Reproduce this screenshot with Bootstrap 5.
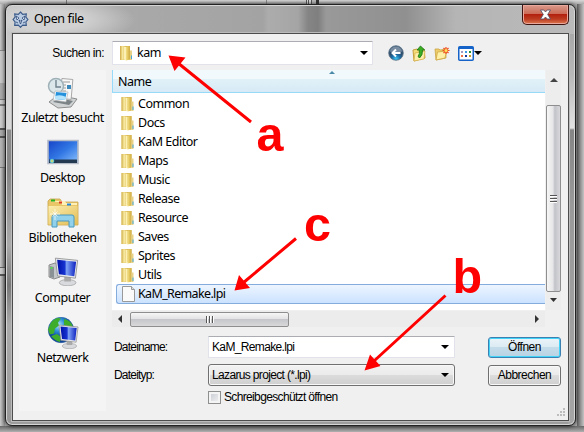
<!DOCTYPE html>
<html lang="de">
<head>
<meta charset="utf-8">
<title>Open file</title>
<link href="https://cdn.jsdelivr.net/npm/bootstrap@5.3.0/dist/css/bootstrap.min.css" rel="stylesheet">
<style>
html,body{width:584px;height:432px;overflow:hidden}
body{font:12.5px/18px "Noto Sans","Open Sans",sans-serif;color:#000;letter-spacing:-.5px;padding:4px 7px 5px 5px;
 background:
 linear-gradient(#777,#777) 66px 0/1px 4px no-repeat,
 linear-gradient(90deg,#555 1px,#ddd 1px 2px,#555 2px 3px,#ddd 3px 5px,#555 5px 6px,#bbb 6px 10px,#333 10px) 306px 0/13px 4px no-repeat,
 linear-gradient(#888,#888) 266px 0/1px 4px no-repeat,
 linear-gradient(transparent 50px,#888 50px 51px,#c8c8c8 51px 83px,#aaa 83px 99px,#777 99px 100px,#ccc 100px 104px,#777 104px 106px,#ccc 106px 128px,#555 128px 130px,#aaa 130px 136px,#555 136px 138px,#b5b5b5 138px 167px,#777 167px 168px,transparent 168px 267px,#666 267px 268px,#ccc 268px 274px,#555 274px 276px,transparent 276px) 0 0/5px 432px no-repeat,
 linear-gradient(#d8d8d8,#aaa) 0 0/584px 4px no-repeat,
 linear-gradient(90deg,#c9c9c9,#8d8d8d) 0 0/5px 426px no-repeat,
 linear-gradient(90deg,#606060,#c4c4c4) 577px 0/7px 426px no-repeat,
 linear-gradient(#686868,#b0b0b0) 0 426px/584px 6px no-repeat,#aaa}
svg{display:block;flex:none}
.dialog{width:571px;height:422px;border:1px solid #222;border-radius:7px;box-shadow:inset 0 0 0 1px #d5d5d5,0 0 4px #222;padding:0 6px 5px;
 background:
 radial-gradient(ellipse 90px 24px at 40px 15px,#d2d2d2 40%,transparent) 0 0/571px 29px no-repeat,
 linear-gradient(90deg,#bbb 0,#a9a9a9 120px,#a3a3a3 257px,#acacac 262px,#a5a5a5 292px,#858585 302px,#7f7f7f 312px,#999 320px,#909090 400px,#b5b5b5 450px,#bababa) 0 0/571px 29px no-repeat,
 linear-gradient(#c4c4c4 0,#d9d9d9 124px,#8b8b8b 125px,#858585 165px,#aaa 240px,#777 280px,#aaa 320px,#979797) 0 0/6px 100% no-repeat,
 linear-gradient(#a5a5a5 20px,#b8b8b8 70px,#e2e2e2 123px,#858585 125px,#999 200px,#a5a5a5) 100% 0/7px 100% no-repeat,
 #9c9c9c}
.caption-bar{height:28px;padding:6px 0 0 0}
.caption-bar span{margin-left:5px;line-height:16px;letter-spacing:-.4px}
.close-box{width:47px;height:20px;border:1px solid #401410;border-top:0;border-radius:0 0 5px 5px;box-shadow:inset 0 0 0 1px #eaa89c;background:linear-gradient(#d99a8c,#cc6c59 45%,#b3210e 50%,#bd3d23 75%,#dd7b51);margin:-6px 0 0 auto}
.client{height:388px;border:1px solid #4c4c4c;background:#f0f0f0;box-shadow:0 0 0 1px #bbb;padding:7px 6px 0}
.shell-font{font-family:"Liberation Sans",Arial,sans-serif;font-size:12px;letter-spacing:-.65px}
.look-label{width:93px;padding-right:8px;line-height:22px;letter-spacing:-.5px}
.drop{background:#fff;border:1px solid #e2e3ea;border-top-color:#abadb3;border-radius:1px}
.look{width:261px;height:24px;padding:0 4px 0 6px}
.look span{margin-left:4px}
.tools{padding-left:15px;gap:7.5px}
.down-arrow{width:0;height:0;border:4px solid transparent;border-top-color:#000;border-bottom:0;flex:none}
.body-row{padding-top:5px}
.places{width:87px;height:341px;background:#f4f4f4;padding-top:7px}
.place{height:60px}
.place span{line-height:17px;white-space:nowrap}
.right-side{margin-left:6px}
.listing{width:449px;height:257px}
.files{width:433px;height:240px;background:#fff}
.head{height:23px;background:linear-gradient(#f2f9fc 9px,#e1f1f8 9px,#d6eaf5);border-bottom:1px solid #96d9f9;border-left:1px solid #96d9f9;line-height:24px;padding-left:5px}
.sort{border:3px solid transparent;border-bottom:3px solid #4b89a8;border-top:0;position:absolute;left:216px;top:1px}
.rows{padding-top:1px}
.file{height:19px;line-height:19px;padding-left:8px;white-space:nowrap}
.file svg{margin-right:3px}
.file.chosen{height:20px;border:1px solid #84acdd;border-right:0;border-radius:3px 0 0 3px;background:linear-gradient(#edf5ff,#cbe2ff);margin-left:4px;padding-left:4px;line-height:18px;letter-spacing:-.65px}
.file.chosen svg{margin-right:2px}
.vbar{width:15px;height:240px;background:#ededed;margin-left:1px}
.vbar-up{height:35px}
.vthumb{height:187px;border:1px solid #8e8e8e;border-radius:2px;background:linear-gradient(90deg,#f6f6f6,#e6e6e8 45%,#c2c3c9 60%,#d9d9dc)}
.hbar{width:433px;height:16px;background:#ececec;margin-top:1px}
.hthumb{width:159px;height:15px;border:1px solid #8e8e8e;border-radius:2px;background:linear-gradient(#f6f6f6,#e3e3e5 45%,#c6c7cb 50%,#d8d8da)}
.name-row{margin-top:9px}
.type-row{margin-top:6px}
.tick-row{margin-top:2px}
.field-label{width:96px;padding-left:2px;letter-spacing:-.8px}
.field{width:247px;height:22px;padding:0 5px 0 3px}
.grad{background:linear-gradient(#f2f2f2,#ebebeb 48%,#dcdcdc 50%,#cfcfcf);border:1px solid #707070;border-radius:3px;box-shadow:inset 0 0 0 1px #f8f8f8}
.push{width:73px;height:21px;margin-left:auto;letter-spacing:-.5px}
.push.default{border-color:#3c7fb1;box-shadow:inset 0 0 0 1px #42d4f8;background:linear-gradient(#eaf4f9,#dceaf2 48%,#c4dcea 50%,#b9d3e3)}
.tick{width:13px;height:13px;border:1px solid #8e8f8f;box-shadow:inset 0 0 0 2px #f4f4f4;background:linear-gradient(135deg,#c5c9d2,#f4f4f4);margin-right:3px}
.notes{left:0;top:0;z-index:3;pointer-events:none}
.notes text{font:bold 48.5px "Liberation Sans",Arial,sans-serif;letter-spacing:0}
.grip{right:18px;bottom:15px}
</style>
<script src="https://cdn.jsdelivr.net/npm/bootstrap@5.3.0/dist/js/bootstrap.bundle.min.js"></script>
</head>
<body>
<svg width="0" height="0" class="position-absolute"><defs>
<linearGradient id="gold"><stop stop-color="#f3e088"/><stop offset=".5" stop-color="#e2c45c"/><stop offset="1" stop-color="#cfac45"/></linearGradient>
<linearGradient id="sheet" x2="1" y2="1"><stop stop-color="#fbeeb0"/><stop offset="1" stop-color="#e3bd55"/></linearGradient>
<linearGradient id="blue" x2="1" y2="1"><stop stop-color="#1542c7"/><stop offset=".5" stop-color="#3277e4"/><stop offset="1" stop-color="#8ec4ff"/></linearGradient>
<linearGradient id="screen" x2="1"><stop stop-color="#0011a8"/><stop offset=".4" stop-color="#1632d0"/><stop offset=".5" stop-color="#7fa2f5"/><stop offset="1" stop-color="#0b1fc0"/></linearGradient>
<radialGradient id="orb" cx=".5" cy=".9"><stop stop-color="#3cc8f4"/><stop offset=".6" stop-color="#1c6ba3"/><stop offset="1" stop-color="#2e4f6e"/></radialGradient>
<radialGradient id="earth" cx=".4" cy=".3"><stop stop-color="#b9ecff"/><stop offset=".5" stop-color="#2c8fd8"/><stop offset="1" stop-color="#0c3f9c"/></radialGradient>
<symbol id="folder" viewBox="0 0 14 16"><path d="M1 1h5v14H1z" fill="#e9d077"/><path d="M1.500 1v14" stroke="#d4b55a"/><path d="M3 1.500h1.500v13H3z" fill="#f6e7a0"/><path d="M5 1h6v13.500H5z" fill="#d9b954"/><path d="M5 1.500l2 .5v13.500l-2-1z" fill="#fdf0b4"/><path d="M7 2l4-1v13.500l-4 1z" fill="url(#gold)"/><path d="M11 5.500h2v9.500h-2z" fill="#e7d186"/><path d="M12 10.500h1v3.500h-1z" fill="#45a7dc"/></symbol>
<symbol id="monitor" viewBox="0 0 22 26"><ellipse cx="12" cy="23" rx="7.500" ry="2.800" fill="#d8dadd" stroke="#999" stroke-width=".6"/><path d="M9 17l6 1v4H9z" fill="#aaa"/><path d="M1 1l20 2-2 16L3 17z" fill="#e7e9ed" stroke="#888" stroke-width=".7"/><path d="M2.600 2.500l17 1.700-1.600 13L4.200 15.500z" fill="url(#screen)"/></symbol>
</defs></svg>

<main class="dialog">
 <header class="caption-bar d-flex align-items-start">
  <svg class="ms-0" width="17" height="17" viewBox="0 0 17 17"><path d="M8.500 1l2.200 2.300 3.600-.3-.4 3 2 2.500-2 2.500.4 3.300-3.600-.2-2.200 2.200-2.200-2.200-3.600.2.400-3.300-2-2.500 2-2.500-.4-3 3.600.3z" fill="#b9cbe2" stroke="#3c5b8a" stroke-width="1.200"/><path d="M4 5l3 2-2 2zm9 0L10 7l2 2zM7 9l1.500 4L10 9l-1.500 1zM4 11l2 1m7-1l-2 1" fill="#e8f1fb" stroke="#2b4675" stroke-width=".8"/></svg>
  <span>Open file</span>
  <div class="close-box d-flex justify-content-center align-items-center"><svg width="13" height="11" viewBox="0 0 13 11"><path d="M1.500 1h3.300l1.700 2 1.700-2h3.300L8.700 5.500l2.800 4.500H8.200L6.500 8l-1.700 2H1.500l2.800-4.500z" fill="#fff" stroke="#5a5268" stroke-width=".9"/></svg></div>
 </header>

 <section class="client">
  <div class="d-flex align-items-center">
   <div class="look-label shell-font text-end">Suchen in:</div>
   <div class="drop look d-flex align-items-center"><svg width="14" height="16"><use href="#folder"/></svg><span class="me-auto">kam</span><i class="down-arrow"></i></div>
   <div class="tools d-flex align-items-center">
    <svg width="16" height="16" viewBox="0 0 16 16"><circle cx="8" cy="8" r="7.300" fill="url(#orb)" stroke="#5d7488" stroke-width=".8"/><path d="M2 6.500a6 5 0 0112 0q-6 2-12 0z" fill="#fff" opacity=".35"/><path d="M12.500 8H5M8 4.500L4.500 8 8 11.500" fill="none" stroke="#fff" stroke-width="2"/></svg>
    <svg width="14" height="17" viewBox="0 0 14 17"><path d="M1 5l4-1 1 1 6-1 1 9-11 3z" fill="#f5dc79" stroke="#c6a03c"/><path d="M3 8l10-2-1 8-10 2z" fill="#ffeeaa" stroke="#d2ad45" stroke-width=".7"/><path d="M8.500 1l4.200 4H10.500q.5 5-3 8-.5-1-1.500-1.500Q8 9 7.300 5H5z" fill="#3cae24" stroke="#1b7312" stroke-width=".8"/></svg>
    <svg width="17" height="16" viewBox="0 0 17 16"><path d="M2 4h4l1 1 6-1v9L3 15z" fill="#eccd6a" stroke="#caa344" stroke-width=".8"/><path d="M4.500 7l9-1-1.500 7L3 15z" fill="#fff0a7" stroke="#d0a744" stroke-width=".8"/><path d="M13 2v7M9.500 5.500h7M10.500 3l5 5M15.500 3l-5 5" stroke="#ef4c1d" stroke-width="1.200"/><circle cx="13" cy="5.500" r="1.500" fill="#ffe35c"/></svg>
    <div class="d-flex align-items-center"><svg width="16" height="15" viewBox="0 0 16 15"><rect x=".75" y=".75" width="14.500" height="13.500" rx="1" fill="#fff" stroke="#1563c8" stroke-width="1.500"/><path d="M1 2h14" stroke="#1563c8" stroke-width="2"/><path d="M3 5h2v2H3z" fill="#a39ac4"/><path d="M7 5h2v2H7z" fill="#3999e6"/><path d="M11 5h2v2h-2z" fill="#249030"/><path d="M3 9h2v2H3z" fill="#ee7042"/><path d="M7 9h2v2H7z" fill="#14399c"/><path d="M11 9h2v2h-2z" fill="#c89824"/></svg><i class="down-arrow"></i></div>
   </div>
  </div>

  <div class="body-row d-flex">
   <nav class="places">
    <div class="place d-flex flex-column align-items-center"><svg width="32" height="32" viewBox="0 0 32 32"><path d="M2 25l9-7 19 4-6 8-13 1z" fill="#d0d3d4" stroke="#777" stroke-width=".8"/><path d="M6 25l6-4 14 3-4 4z" fill="#7b8386"/><path d="M14 2h11v20H14z" fill="#f7f7f7" stroke="#999" stroke-width=".8" transform="rotate(5 20 12)"/><path d="M16 5h7M16 8h3M16 11h3M16 14h3" stroke="#999"/><path d="M20 8h4v4h-4z" fill="#3b89ba"/><circle cx="9" cy="9" r="7.500" fill="#dbe7ea" stroke="#9fb1b8" stroke-width="1.500"/><path d="M9 3v7h5" fill="none" stroke="#71838e" stroke-width="1.400"/><path d="M8 14l13 1-2 10-13-2z" fill="#f6fbff" stroke="#aaa" stroke-width=".6"/><path d="M9 15l10.500 1-1.500 7-10-1z" fill="#2391dc"/><path d="M8 19q6-2 11 1l-1 3-10-1z" fill="#b6e4fb"/></svg><span>Zuletzt besucht</span></div>
    <div class="place d-flex flex-column align-items-center"><svg width="32" height="32" viewBox="0 0 32 32"><path d="M1 3.500h30v23H1z" fill="url(#blue)" stroke="#b3bac6" stroke-width="1.600"/><path d="M2 22.500h28V26H2z" fill="#23394f"/><circle cx="5" cy="24" r="2.300" fill="#4ac1e6"/><path d="M5 22.500v3M3.500 24h3" stroke="#e7db61"/></svg><span>Desktop</span></div>
    <div class="place d-flex flex-column align-items-center"><svg width="32" height="32" viewBox="0 0 32 32"><path d="M1 28V4l2-2h10l2 3h16v23z" fill="#e9c768" stroke="#c9a44c" stroke-width=".8"/><path d="M3 5h11l1 3h15v-2H19l-1-2h-8z" fill="#fff0b8"/><path d="M1.500 9h29v18.500h-29z" fill="url(#sheet)"/><path d="M4 2.500h4v2H4z" fill="#21b324"/><path d="M12 4.500h3v2h-3z" fill="#df3c28"/><path d="M20 6.500h4v2h-4z" fill="#2588dd"/><path d="M5 30V20q0-2 2-2h18q2 0 2 2v10h-5v-6H10v6z" fill="#91d1eb" stroke="#4897be"/><path d="M8 12v11M3 17h10M5.500 14.500l5 5m0-5l-5 5" stroke="#fff" stroke-width=".7"/></svg><span>Bibliotheken</span></div>
    <div class="place d-flex flex-column align-items-center"><svg width="32" height="32" viewBox="0 0 32 32"><path d="M2 8l6-2 5 2v12l-6 2-5-2z" fill="#c3c7c9" stroke="#777" stroke-width=".8"/><path d="M3 9l4 1v11l-4-1z" fill="#8b9296"/><path d="M3.500 10h2v2h-2z" fill="#57dc50"/><use href="#monitor" x="7" y="0" width="25" height="29"/></svg><span>Computer</span></div>
    <div class="place d-flex flex-column align-items-center"><svg width="32" height="32" viewBox="0 0 32 32"><circle cx="14" cy="13" r="12.700" fill="url(#earth)" stroke="#235d9c" stroke-width=".6"/><path d="M4 5.500q5-6 10-4l-3 4 1 3-4 3-1 5-4 1-2-5zM17 2q7 1 9 8l-5 1-4-3zM4 19l6-2 4 3-1 5q-5-1-9-6z" fill="#3fad2c"/><use href="#monitor" x="11" y="7" width="21" height="25"/></svg><span>Netzwerk</span></div>
   </nav>

   <div class="right-side">
    <div class="listing">
     <div class="d-flex">
      <div class="files">
       <div class="head position-relative"><span>Name</span><i class="sort"></i></div>
       <div class="rows" id="rows"></div>
      </div>
      <div class="vbar d-flex flex-column">
       <div class="vbar-up d-flex align-items-center justify-content-center"><svg class="mb-3" width="8" height="4" viewBox="0 0 8 4"><path d="M0 4l4-4 4 4z" fill="#444"/></svg></div>
       <div class="vthumb d-flex align-items-center justify-content-center"><svg width="8" height="8" viewBox="0 0 8 8"><path d="M0 .5h7M0 3.500h7M0 6.500h7" stroke="#555"/><path d="M0 1.500h7M0 4.500h7M0 7.500h7" stroke="#fff"/></svg></div>
       <div class="d-flex justify-content-center mt-auto pb-2"><svg width="7" height="4" viewBox="0 0 7 4"><path d="M0 0h7L3.500 4z" fill="#333"/></svg></div>
      </div>
     </div>
     <div class="hbar d-flex align-items-center">
      <svg width="18" height="8" viewBox="0 0 18 8"><path d="M10 0v8L6 4z" fill="#333"/></svg>
      <div class="hthumb d-flex align-items-center justify-content-center"><svg width="8" height="7" viewBox="0 0 8 7"><path d="M.5 0v7M3.500 0v7M6.500 0v7" stroke="#555"/><path d="M1.500 0v7M4.500 0v7M7.500 0v7" stroke="#fff"/></svg></div>
      <svg class="ms-auto me-1" width="8" height="8" viewBox="0 0 8 8"><path d="M2 0v8l4-4z" fill="#333"/></svg>
     </div>
    </div>
    <div class="shell-font">
     <div class="name-row d-flex align-items-center"><div class="field-label">Dateiname:</div><div class="drop field d-flex align-items-center"><span class="me-auto">KaM_Remake.lpi</span><i class="down-arrow"></i></div><div class="grad push default d-flex align-items-center justify-content-center">Öffnen</div></div>
     <div class="type-row d-flex align-items-center"><div class="field-label">Dateityp:</div><div class="grad field d-flex align-items-center"><span class="me-auto">Lazarus project (*.lpi)</span><i class="down-arrow"></i></div><div class="grad push d-flex align-items-center justify-content-center">Abbrechen</div></div>
     <div class="tick-row d-flex align-items-center"><div class="field-label"></div><div class="tick"></div><span>Schreibgeschützt öffnen</span></div>
    </div>
   </div>
  </div>
 </section>
</main>

<svg class="grip position-absolute" width="9" height="9" viewBox="0 0 9 9"><path d="M6 0h2v2H6zM3 3h2v2H3zM6 3h2v2H6zM0 6h2v2H0zM3 6h2v2H3zM6 6h2v2H6z" fill="#bdbdbd"/></svg>
<svg class="notes position-absolute" width="584" height="432" viewBox="0 0 584 432" fill="#f00">
 <path d="M251 122L178 63M296 238.500L243 283M445.500 295.500L374 361" stroke="#f00" stroke-width="3"/>
 <path d="M168.500 55.500l17 2-11 13.500zM234.500 290.500l4.500-15.500 11 13zM364.500 370.500l5.500-16 10.500 11.500z"/>
 <text x="256.500" y="151">a</text><text x="304" y="240.500">c</text><text x="452.500" y="292.500">b</text>
</svg>
<script>
const rows=document.getElementById('rows');
['Common','Docs','KaM Editor','Maps','Music','Release','Resource','Saves','Sprites','Utils'].forEach(n=>{
 rows.insertAdjacentHTML('beforeend',`<div class="file d-flex align-items-center"><svg width="15" height="16"><use href="#folder"/></svg><span>${n}</span></div>`);
});
rows.insertAdjacentHTML('beforeend','<div class="file chosen d-flex align-items-center"><svg width="15" height="16" viewBox="0 0 15 16"><path d="M1.500.5h9l3 3v12h-12z" fill="#fafafa" stroke="#999"/><path d="M10.500.5v3h3" fill="#ddd" stroke="#999"/></svg><span>KaM_Remake.lpi</span></div>');
</script>
</body>
</html>
